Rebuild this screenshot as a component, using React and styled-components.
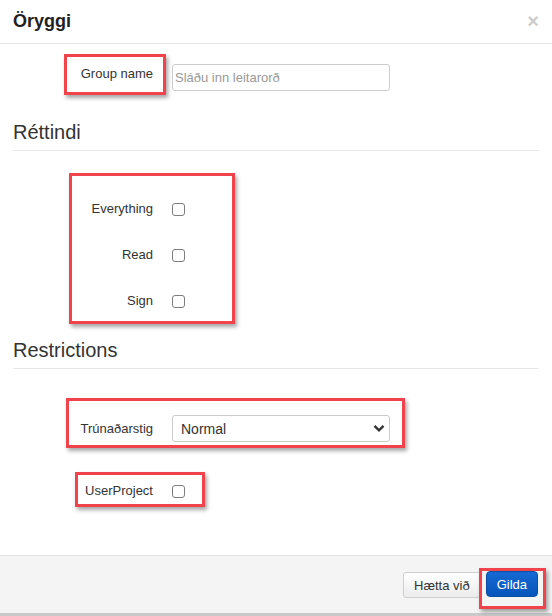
import React from 'react';
import styled, { createGlobalStyle } from 'styled-components';

const GlobalStyle = createGlobalStyle`
  html, body {
    margin: 0;
    padding: 0;
    background: #fff;
  }
  body {
    font-family: "Liberation Sans", Arial, sans-serif;
    color: #333;
  }
`;

const Modal = styled.div`
  display: flex;
  flex-direction: column;
  width: 552px;
  height: 616px;
  box-sizing: border-box;
  background: #fff;
`;

const Header = styled.div`
  display: flex;
  align-items: center;
  justify-content: space-between;
  height: 44px;
  box-sizing: border-box;
  padding: 0 13px 1px 13px;
  border-bottom: 1px solid #e5e5e5;
`;

const Title = styled.h4`
  margin: 0;
  font-size: 18px;
  font-weight: bold;
  line-height: 24px;
  color: #222;
`;

const Close = styled.button`
  border: 0;
  background: none;
  padding: 0;
  font-family: "Liberation Sans", Arial, sans-serif;
  font-size: 20px;
  font-weight: bold;
  line-height: 20px;
  color: #000;
  opacity: 0.2;
  cursor: pointer;
`;

const Body = styled.div`
  flex: 1;
  padding: 0 13px;
`;

const Legend = styled.div`
  margin-top: ${(p) => p.$mt}px;
  font-size: 20px;
  line-height: 28px;
  padding-bottom: 4px;
  border-bottom: 1px solid #e8e8e8;
  color: #333;
`;

const Group = styled.div`
  position: relative;
  margin-top: ${(p) => p.$mt}px;
  display: flex;
  flex-direction: column;
  gap: ${(p) => p.$gap || 0}px;
`;

const Row = styled.div`
  position: relative;
  display: flex;
  align-items: ${(p) => p.$align || 'center'};
  gap: 19px;
  margin-top: ${(p) => p.$mt || 0}px;
  height: ${(p) => p.$h}px;
`;

const Label = styled.label`
  width: 140px;
  flex: none;
  text-align: right;
  font-size: 13px;
  line-height: 18px;
  color: #333;
  padding-top: ${(p) => p.$pt || 0}px;
`;

const TextInput = styled.input`
  width: 218px;
  height: 27px;
  box-sizing: border-box;
  border: 1px solid #ccc;
  border-radius: 3px;
  padding: 0 2px;
  font-family: "Liberation Sans", Arial, sans-serif;
  font-size: 13px;
  color: #333;
  &::placeholder {
    color: #999;
  }
`;

const Check = styled.input.attrs({ type: 'checkbox' })`
  appearance: none;
  -webkit-appearance: none;
  margin: 0;
  width: 13px;
  height: 13px;
  border: 1px solid #7d7d7d;
  border-radius: 3px;
  background: #fff;
  flex: none;
`;

const SelectWrap = styled.div`
  position: relative;
  width: 218px;
  height: 27px;
`;

const Select = styled.select`
  appearance: none;
  -webkit-appearance: none;
  width: 100%;
  height: 100%;
  box-sizing: border-box;
  border: 1px solid #ccc;
  border-radius: 3px;
  background: #fff;
  padding: 0 24px 0 8px;
  font-family: "Liberation Sans", Arial, sans-serif;
  font-size: 14px;
  color: #333;
`;

const Chevron = styled.svg`
  position: absolute;
  right: 5px;
  top: 9px;
  pointer-events: none;
`;

/* red annotation frame drawn over the form */
const Marker = styled.span`
  position: absolute;
  left: ${(p) => p.$x}px;
  top: ${(p) => p.$y}px;
  width: ${(p) => p.$w}px;
  height: ${(p) => p.$h}px;
  box-sizing: border-box;
  border: 3px solid #f0434b;
  box-shadow: 2px 3px 4px rgba(0, 0, 0, 0.35);
  pointer-events: none;
`;

const Footer = styled.div`
  display: flex;
  justify-content: flex-end;
  align-items: flex-start;
  gap: 5px;
  height: 61px;
  box-sizing: border-box;
  padding: 16px 14px 0 0;
  background: #f4f4f4;
  border-top: 1px solid #e3e3e3;
  border-bottom: 3px solid #c9c9c9;
`;

const Button = styled.button`
  position: relative;
  height: 26px;
  padding: 0 10px;
  border-radius: ${(p) => (p.$primary ? 4 : 3)}px;
  font-family: "Liberation Sans", Arial, sans-serif;
  font-size: 13px;
  margin-top: ${(p) => (p.$primary ? -1 : 0)}px;
  border: 1px solid ${(p) => (p.$primary ? '#0a4fa6' : '#cfcfcf')};
  color: ${(p) => (p.$primary ? '#fff' : '#333')};
  background: ${(p) =>
    p.$primary
      ? 'linear-gradient(#1669d3, #0755bb)'
      : 'linear-gradient(#ffffff, #ececec)'};
  cursor: pointer;
`;

export default function App() {
  return (
    <Modal>
      <GlobalStyle />
      <Header>
        <Title>Öryggi</Title>
        <Close aria-label="close">×</Close>
      </Header>
      <Body>
        <Row $mt={20} $h={27} $align="flex-start">
          <Label $pt={1}>Group name</Label>
          <TextInput placeholder="Sláðu inn leitarorð" />
          <Marker $x={51} $y={-10} $w={102} $h={41} />
        </Row>

        <Legend $mt={27}>Réttindi</Legend>
        <Group $mt={48} $gap={26}>
          <Row $h={20}>
            <Label>Everything</Label>
            <Check />
          </Row>
          <Row $h={20}>
            <Label>Read</Label>
            <Check />
          </Row>
          <Row $h={20}>
            <Label>Sign</Label>
            <Check />
          </Row>
          <Marker $x={56} $y={-26} $w={166} $h={151} />
        </Group>

        <Legend $mt={25}>Restrictions</Legend>
        <Row $mt={46} $h={27}>
          <Label>Trúnaðarstig</Label>
          <SelectWrap>
            <Select defaultValue="Normal">
              <option>Normal</option>
            </Select>
            <Chevron width="12" height="9" viewBox="0 0 12 9">
              <path d="M1.5 1.8 L6 6.3 L10.5 1.8" fill="none" stroke="#333" strokeWidth="2.4" />
            </Chevron>
          </SelectWrap>
          <Marker $x={53} $y={-17} $w={339} $h={50} />
        </Row>

        <Row $mt={39} $h={20}>
          <Label>UserProject</Label>
          <Check />
          <Marker $x={62} $y={-9} $w={130} $h={35} />
        </Row>
      </Body>
      <Footer>
        <Button>Hætta við</Button>
        <Button $primary>
          Gilda
          <Marker $x={-8} $y={-4} $w={67} $h={41} />
        </Button>
      </Footer>
    </Modal>
  );
}
